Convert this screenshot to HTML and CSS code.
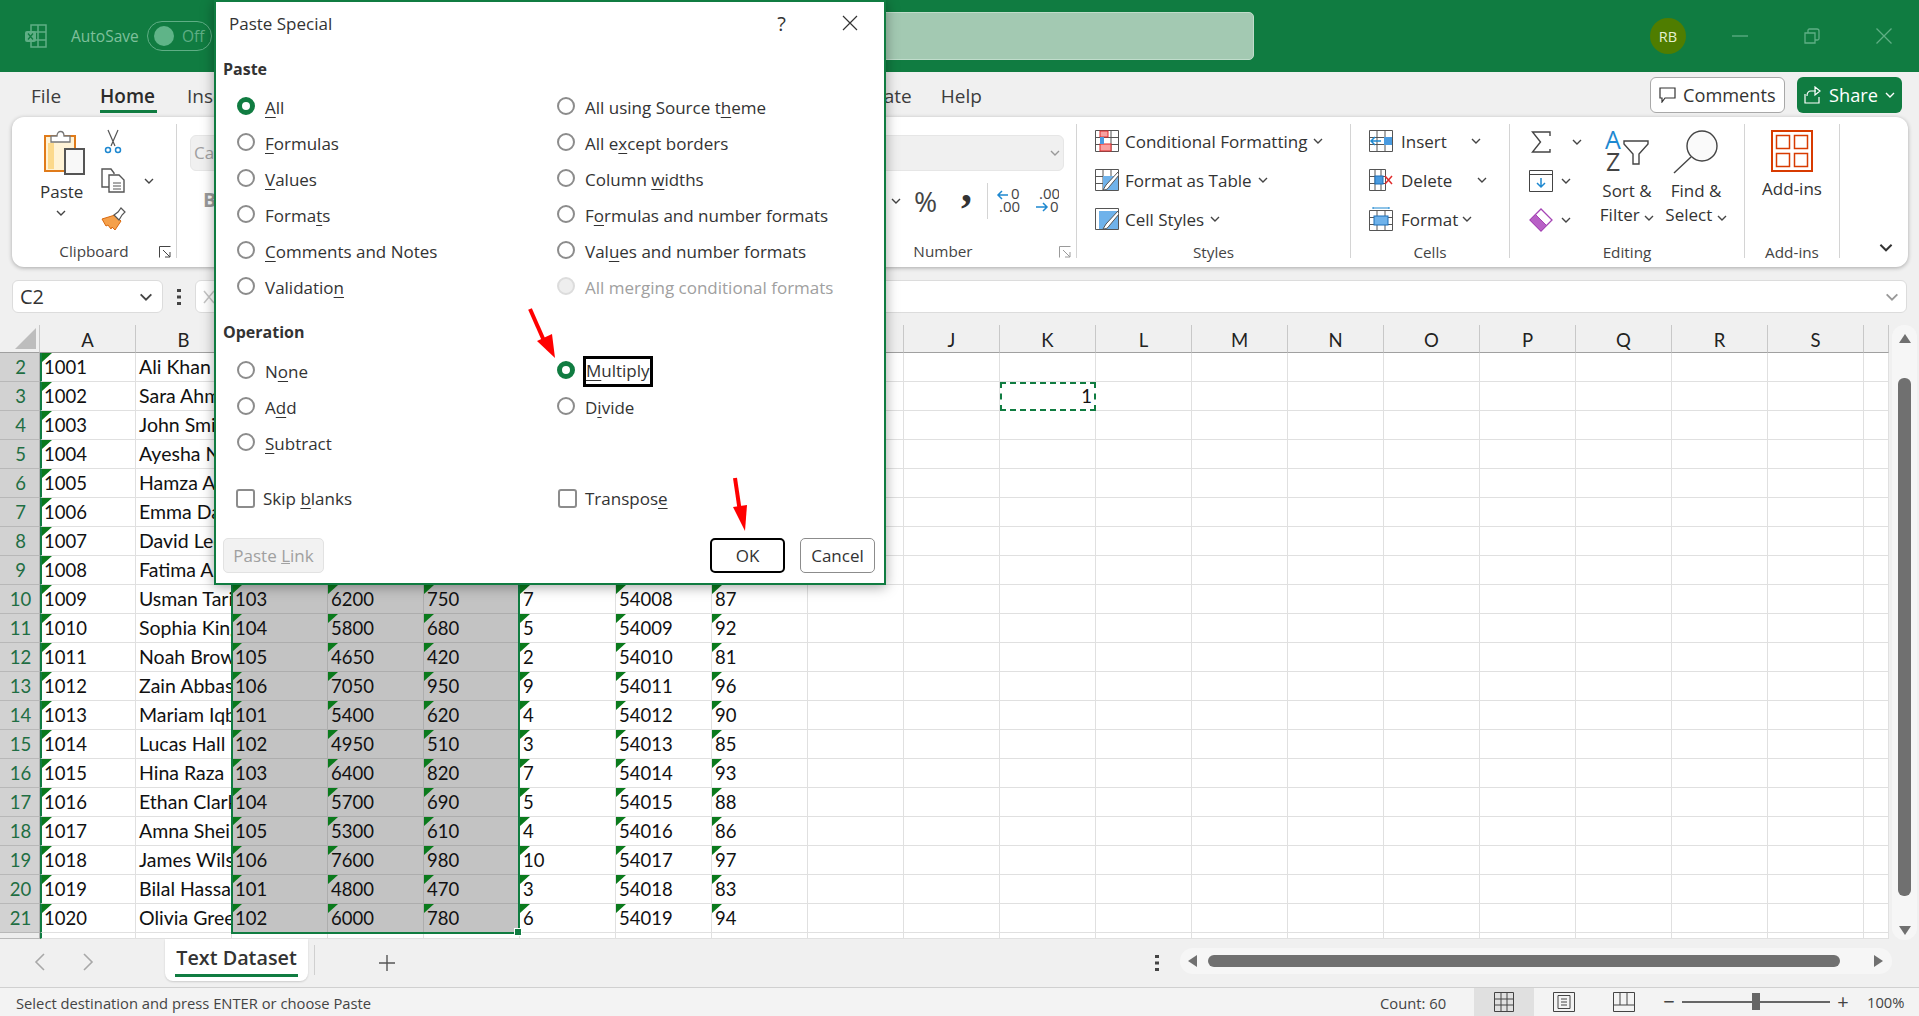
FILE: index.html
```html
<!DOCTYPE html>
<html lang="en">
<head>
    <meta charset="UTF-8">
    <title>Paste Special - Excel</title>
    <link rel="stylesheet" href="styles.css">
</head>
<body>
    <svg class="sprite" width="0" height="0">
        <symbol id="chev" viewBox="0 0 10 6"><path d="M1 1l4 4 4-4" fill="none" stroke="currentColor" stroke-width="1.4"/></symbol>
        <symbol id="launcher" viewBox="0 0 12 12"><path d="M.5 11.5V.5h11M4 4l7 7M11 6v5H6" fill="none" stroke="currentColor"/></symbol>
    </svg>

    <div class="app">
        <!-- Title bar -->
        <div class="titlebar">
            <svg class="logo" width="24" height="24" viewBox="0 0 24 24">
                <path d="M7 1h15v22H7zM7 8h15M7 16h15M14 1v22" fill="none" stroke="#5fae85" stroke-width="1.5"/>
                <rect x="1" y="7" width="11" height="11" rx="2" fill="#5fae85"/>
                <path d="M4 9.5l5 6M9 9.5l-5 6" stroke="#107c41" stroke-width="1.3"/>
            </svg>
            <span class="autosave">AutoSave</span>
            <span class="toggle"><span class="toggle-knob"></span>Off</span>
            <div class="search"></div>
            <span class="avatar">RB</span>
            <svg class="win-btn" width="16" height="16" viewBox="0 0 16 16"><path d="M0 8h16" stroke="#5fae85" stroke-width="1.3"/></svg>
            <svg class="win-btn" width="16" height="16" viewBox="0 0 16 16"><path d="M1 5h10v10H1zM4 5V2.500C4 1.500 4.500 1 5.500 1H13c1 0 2 1 2 2v7.500c0 1-.5 1.500-1.500 1.500H11" fill="none" stroke="#5fae85" stroke-width="1.3"/></svg>
            <svg class="win-btn" width="16" height="16" viewBox="0 0 16 16"><path d="M.5.500l15 15M15.500.500l-15 15" stroke="#5fae85" stroke-width="1.3"/></svg>
        </div>

        <!-- Menu tabs -->
        <div class="menubar">
            <a class="menu-item file">File</a>
            <a class="menu-item active">Home</a>
            <a class="menu-item">Insert</a>
            <a class="menu-item tail">Automate</a>
            <a class="menu-item">Help</a>
            <button class="comments-btn">
                <svg width="17" height="16" viewBox="0 0 17 16"><path d="M1 1h15v10H6l-3 4v-4H1z" fill="none" stroke="#333" stroke-width="1.2"/></svg>
                Comments
            </button>
            <button class="share-btn">
                <svg width="18" height="18" viewBox="0 0 18 18"><path d="M12 5H7C4 5 3 7 3 10M11 1l5 4-5 4zM1 8v9h14v-6" fill="none" stroke="#fff" stroke-width="1.200"/></svg>
                Share
                <svg class="chev"><use href="#chev"/></svg>
            </button>
        </div>

        <!-- Ribbon -->
        <div class="ribbon">
            <div class="group clipboard">
                <div class="group-body clip-body">
                    <div class="paste-col">
                        <svg width="42" height="46" viewBox="0 0 42 46">
                            <rect x="1" y="6" width="30" height="35" fill="#fff3d6" stroke="#e07b1a" stroke-width="2"/>
                            <rect x="4" y="13" width="6" height="26" fill="#fcd98b"/>
                            <path d="M7 12V6h6c0-6 7-6 7 0h6v6z" fill="#fff" stroke="#777" stroke-width="1.300"/>
                            <rect x="21" y="19" width="19" height="25" fill="#f8f8f8" stroke="#555" stroke-width="2"/>
                        </svg>
                        <span>Paste</span>
                        <svg class="chev"><use href="#chev"/></svg>
                    </div>
                    <div class="clip-tools">
                        <svg width="18" height="25" viewBox="0 0 18 25">
                            <path d="M4 1l7 16M14 1L7 17" stroke="#555" stroke-width="1.200" fill="none"/>
                            <circle cx="4" cy="21" r="2.500" fill="#fff" stroke="#1e88d0" stroke-width="1.500"/>
                            <circle cx="14" cy="21" r="2.500" fill="#fff" stroke="#1e88d0" stroke-width="1.500"/>
                        </svg>
                        <span class="tool-row">
                            <svg width="25" height="25" viewBox="0 0 25 25">
                                <path d="M8 19H1V1h9l3 4v1" fill="#fff" stroke="#555" stroke-width="1.400"/>
                                <path d="M8 7h10l5 5v12H8z" fill="#fff" stroke="#555" stroke-width="1.400"/>
                                <path d="M12 15h8M12 18h8M12 21h8" stroke="#555"/>
                            </svg>
                            <svg class="chev"><use href="#chev"/></svg>
                        </span>
                        <svg width="25" height="24" viewBox="0 0 25 24">
                            <path d="M1 12l13-4 6 6-6 9-3-3-1 2-3-4-2 1z" fill="#f5a04a" stroke="#d9690f"/>
                            <path d="M13 8l4-3 3-4 4 4-3 3-3 5z" fill="#fff" stroke="#555" stroke-width="1.200"/>
                        </svg>
                    </div>
                </div>
                <div class="group-label">Clipboard</div>
                <svg class="launcher"><use href="#launcher"/></svg>
            </div>

            <!-- Font and Alignment groups lie behind the dialog -->
            <div class="group font-group">
                <div class="group-body combo-body">
                    <div class="combo">Ca</div>
                    <div class="font-b">B</div>
                </div>
            </div>

            <div class="group align-group"></div>

            <div class="group number-group">
                <div class="group-body number-body">
                    <div class="combo number-combo"><svg class="chev"><use href="#chev"/></svg></div>
                    <div class="number-tools">
                        <svg class="chev"><use href="#chev"/></svg>
                        <span class="percent">%</span>
                        <span class="comma">,</span>
                        <span class="num-sep"></span>
                        <svg width="24" height="26" viewBox="0 0 24 26">
                            <path d="M12 7H2M6 3L2 7l4 4" fill="none" stroke="#1e88d0" stroke-width="1.500"/>
                            <text x="15" y="11" class="dec-text">0</text>
                            <text x="3" y="24" class="dec-text">.00</text>
                        </svg>
                        <svg width="24" height="26" viewBox="0 0 24 26">
                            <text x="4" y="11" class="dec-text">.00</text>
                            <path d="M1 19h11M8 15l4 4-4 4" fill="none" stroke="#1e88d0" stroke-width="1.500"/>
                            <text x="15" y="24" class="dec-text">0</text>
                        </svg>
                    </div>
                </div>
                <div class="group-label">Number</div>
                <svg class="launcher faded"><use href="#launcher"/></svg>
            </div>

            <div class="group styles-group">
                <div class="group-body stack">
                    <div class="stack-row">
                        <svg width="24" height="22" viewBox="0 0 24 22">
                            <path d="M.5.500h23v21H.5zM8 .500v21M16 .500v21M.5 7.500h23M.5 14.500h23" fill="#fff" stroke="#555"/>
                            <rect x="5" y="1" width="8" height="6" fill="#f7a1a1" stroke="#e02b2b"/>
                            <rect x="5" y="14" width="11" height="7" fill="#f7a1a1" stroke="#e02b2b"/>
                            <rect x="5" y="7" width="4" height="7" fill="#4a9be0"/>
                        </svg>
                        Conditional Formatting
                        <svg class="chev"><use href="#chev"/></svg>
                    </div>
                    <div class="stack-row">
                        <svg width="24" height="22" viewBox="0 0 24 22">
                            <path d="M.5.500h23v21H.5zM8 .500v21M16 .500v21M.5 7.500h23M.5 14.500h23" fill="#fff" stroke="#555"/>
                            <path d="M8 7h15v14H8z" fill="#6fb2ea"/>
                            <path d="M23 3L11 16l-3 5c3 0 5-1 6-3L24 6z" fill="#fff" stroke="#555"/>
                        </svg>
                        Format as Table
                        <svg class="chev"><use href="#chev"/></svg>
                    </div>
                    <div class="stack-row">
                        <svg width="24" height="22" viewBox="0 0 24 22">
                            <path d="M.5.500h23v21H.5z" fill="#fff" stroke="#555"/>
                            <path d="M4 3h19v18H4z" fill="#6fb2ea"/>
                            <path d="M23 3L11 16l-3 5c3 0 5-1 6-3L24 6z" fill="#fff" stroke="#555"/>
                        </svg>
                        Cell Styles
                        <svg class="chev"><use href="#chev"/></svg>
                    </div>
                </div>
                <div class="group-label low">Styles</div>
            </div>

            <div class="group cells-group">
                <div class="group-body stack">
                    <div class="stack-row">
                        <svg width="24" height="22" viewBox="0 0 24 22">
                            <path d="M.5.500h23v21H.5zM8 .500v21M16 .500v21M.5 7.500h23M.5 14.500h23" fill="#fff" stroke="#555"/>
                            <rect x="15" y="7" width="8" height="8" fill="#4a9be0"/>
                            <path d="M12 11H2M6 7l-4 4 4 4" fill="none" stroke="#1e88d0" stroke-width="1.500"/>
                        </svg>
                        <span class="w-insert">Insert</span>
                        <svg class="chev"><use href="#chev"/></svg>
                    </div>
                    <div class="stack-row">
                        <svg width="24" height="22" viewBox="0 0 24 22">
                            <path d="M.5.500h16v21H.5zM6 .500v21M12 .500v21M.5 7.500h16M.5 14.500h16" fill="#fff" stroke="#555"/>
                            <rect x="6" y="7" width="8" height="8" fill="#4a9be0" stroke="#1c6fb8"/>
                            <path d="M16 7l7 8M23 7l-7 8" stroke="#e02b2b" stroke-width="1.500"/>
                        </svg>
                        <span class="w-delete">Delete</span>
                        <svg class="chev"><use href="#chev"/></svg>
                    </div>
                    <div class="stack-row">
                        <svg width="24" height="24" viewBox="0 0 24 24">
                            <path d="M.5 3.500h23v20H.5zM8 3.500v20M16 3.500v20M.5 10.500h23M.5 17.500h23" fill="#fff" stroke="#555"/>
                            <rect x="5" y="9" width="14" height="9" fill="#6fb2ea" stroke="#1c6fb8"/>
                            <path d="M4 1h16M4 0v2M20 0v2" stroke="#1e88d0"/>
                        </svg>
                        <span class="w-format">Format</span>
                        <svg class="chev"><use href="#chev"/></svg>
                    </div>
                </div>
                <div class="group-label low">Cells</div>
            </div>

            <div class="group editing-group">
                <div class="group-body editing-body">
                    <div class="edit-tools">
                        <div class="edit-row">
                            <svg width="24" height="22" viewBox="0 0 24 22"><path d="M21 5V1H3.500l8 10-8 10H21v-3" fill="none" stroke="#444" stroke-width="1.400"/></svg>
                            <svg class="chev far"><use href="#chev"/></svg>
                        </div>
                        <div class="edit-row">
                            <svg width="24" height="22" viewBox="0 0 24 22">
                                <path d="M.5.500h23v21H.5zM.5 4.500h23" fill="#fff" stroke="#444"/>
                                <path d="M12 8v9M8 13l4 4 4-4" fill="none" stroke="#1e88d0" stroke-width="1.500"/>
                            </svg>
                            <svg class="chev"><use href="#chev"/></svg>
                        </div>
                        <div class="edit-row">
                            <svg width="24" height="24" viewBox="0 0 24 24">
                                <path d="M1 12L12 1l11 11-11 11z" fill="#fff" stroke="#a545b5" stroke-width="1.300"/>
                                <path d="M1 12l5.500-5.500 11 11L12 23z" fill="#b860c6" stroke="#a545b5"/>
                            </svg>
                            <svg class="chev"><use href="#chev"/></svg>
                        </div>
                    </div>
                    <div class="big-btn sort-btn">
                        <svg width="44" height="44" viewBox="0 0 44 44">
                            <text x="0" y="19" class="az-a">A</text>
                            <text x="1" y="41" class="az-z">Z</text>
                            <path d="M19 11h24v3L34 24v10h-6V24L19 14z" fill="#fff" stroke="#444" stroke-width="1.400"/>
                        </svg>
                        <span>Sort &amp;</span>
                        <span>Filter <svg class="chev"><use href="#chev"/></svg></span>
                    </div>
                    <div class="big-btn find-btn">
                        <svg width="46" height="44" viewBox="0 0 46 44">
                            <circle cx="29" cy="16" r="15" fill="#fafafa" stroke="#444" stroke-width="1.400"/>
                            <path d="M18 27L1 43" stroke="#444" stroke-width="1.400"/>
                        </svg>
                        <span>Find &amp;</span>
                        <span>Select <svg class="chev"><use href="#chev"/></svg></span>
                    </div>
                </div>
                <div class="group-label low">Editing</div>
            </div>

            <div class="group addins-group">
                <div class="group-body">
                    <div class="big-btn">
                        <svg width="42" height="42" viewBox="0 0 42 42">
                            <path d="M1 1h40v40H1z" fill="#fff" stroke="#d83b01" stroke-width="2"/>
                            <path d="M5.500 5.500h13v13h-13zM23.500 5.500h13v13h-13zM5.500 23.500h13v13h-13zM23.500 23.500h13v13h-13z" fill="#fff" stroke="#d83b01" stroke-width="1.500"/>
                        </svg>
                        <span>Add-ins</span>
                    </div>
                </div>
                <div class="group-label low">Add-ins</div>
            </div>

            <svg class="collapse"><use href="#chev"/></svg>
        </div>

        <!-- Formula bar -->
        <div class="formulabar">
            <div class="namebox">C2 <svg class="chev"><use href="#chev"/></svg></div>
            <svg class="kebab" width="4" height="16" viewBox="0 0 4 16"><path d="M0 0h4v3H0zM0 6.500h4v3H0zM0 13h4v3H0z" fill="#444"/></svg>
            <div class="formula-input">
                <svg class="cancel-x" width="12" height="14" viewBox="0 0 12 14"><path d="M1 1l10 12M11 1L1 13" stroke="#c4c4c4" stroke-width="1.500"/></svg>
                <svg class="chev"><use href="#chev"/></svg>
            </div>
        </div>

        <!-- Sheet -->
        <div class="sheet-area">
            <div class="grid" id="grid">
                <div class="selection"></div>
            </div>
            <div class="vscroll">
                <span class="arrow-up"></span>
                <span class="vthumb"></span>
                <span class="arrow-down"></span>
            </div>
        </div>

        <!-- Sheet tabs -->
        <div class="sheetbar">
            <svg class="sheet-nav" width="12" height="18" viewBox="0 0 12 18"><path d="M10 1L2 9l8 8" fill="none" stroke="#a8a8a8" stroke-width="1.600"/></svg>
            <svg class="sheet-nav" width="12" height="18" viewBox="0 0 12 18"><path d="M2 1l8 8-8 8" fill="none" stroke="#a8a8a8" stroke-width="1.600"/></svg>
            <div class="sheet-tab"><span>Text Dataset</span></div>
            <span class="sheet-sep"></span>
            <svg class="sheet-add" width="18" height="18" viewBox="0 0 18 18"><path d="M9 1v16M1 9h16" stroke="#555" stroke-width="1.400"/></svg>
            <svg class="kebab sheet-kebab" width="4" height="16" viewBox="0 0 4 16"><path d="M0 0h4v3H0zM0 6.500h4v3H0zM0 13h4v3H0z" fill="#444"/></svg>
            <div class="hscroll">
                <span class="arrow-left"></span>
                <span class="hthumb"></span>
                <span class="arrow-right"></span>
            </div>
        </div>

        <!-- Status bar -->
        <div class="statusbar">
            <span class="status-msg">Select destination and press ENTER or choose Paste</span>
            <span class="status-count">Count: 60</span>
            <div class="view-btn on">
                <svg width="20" height="20" viewBox="0 0 20 20"><path d="M.5.500h19v19H.5zM7 .500v19M13 .500v19M.5 7h19M.5 13h19" fill="none" stroke="#444"/></svg>
            </div>
            <div class="view-btn">
                <svg width="22" height="20" viewBox="0 0 22 20"><path d="M.5.500h21v19H.5z" fill="none" stroke="#444"/><path d="M5 3.500h12v13H5zM8 7h6M8 10h6M8 13h6" fill="none" stroke="#444"/></svg>
            </div>
            <div class="view-btn">
                <svg width="22" height="20" viewBox="0 0 22 20"><path d="M.5.500h21v19H.5zM.5 13h21M7 .500V13M14 .500V13" fill="none" stroke="#444"/></svg>
            </div>
            <div class="zoom-ctl">
                <span class="zoom-sign">&minus;</span>
                <span class="zoom-track"><span class="zoom-thumb"></span></span>
                <span class="zoom-sign">+</span>
                <span class="zoom-val">100%</span>
            </div>
        </div>
    </div>

    <!-- Paste Special dialog -->
    <div class="dialog">
        <div class="dlg-title">
            <span>Paste Special</span>
            <span class="dlg-help">?</span>
            <svg width="16" height="16" viewBox="0 0 16 16"><path d="M1 1l14 14M15 1L1 15" stroke="#333" stroke-width="1.200"/></svg>
        </div>
        <div class="dlg-heading">Paste</div>
        <div class="opt-grid">
            <label class="opt"><span class="radio on"></span><span><u>A</u>ll</span></label>
            <label class="opt"><span class="radio"></span><span>All using Source t<u>h</u>eme</span></label>
            <label class="opt"><span class="radio"></span><span><u>F</u>ormulas</span></label>
            <label class="opt"><span class="radio"></span><span>All e<u>x</u>cept borders</span></label>
            <label class="opt"><span class="radio"></span><span><u>V</u>alues</span></label>
            <label class="opt"><span class="radio"></span><span>Column <u>w</u>idths</span></label>
            <label class="opt"><span class="radio"></span><span>Forma<u>t</u>s</span></label>
            <label class="opt"><span class="radio"></span><span>F<u>o</u>rmulas and number formats</span></label>
            <label class="opt"><span class="radio"></span><span><u>C</u>omments and Notes</span></label>
            <label class="opt"><span class="radio"></span><span>Val<u>u</u>es and number formats</span></label>
            <label class="opt"><span class="radio"></span><span>Validatio<u>n</u></span></label>
            <label class="opt disabled"><span class="radio"></span><span>All merging conditional formats</span></label>
        </div>
        <div class="dlg-heading second">Operation</div>
        <div class="opt-grid">
            <label class="opt"><span class="radio"></span><span>N<u>o</u>ne</span></label>
            <label class="opt"><span class="radio on"></span><span class="focus"><u>M</u>ultiply</span></label>
            <label class="opt"><span class="radio"></span><span>A<u>d</u>d</span></label>
            <label class="opt"><span class="radio"></span><span>D<u>i</u>vide</span></label>
            <label class="opt"><span class="radio"></span><span><u>S</u>ubtract</span></label>
        </div>
        <div class="opt-grid checks">
            <label class="opt"><span class="check left"></span><span>Skip <u>b</u>lanks</span></label>
            <label class="opt"><span class="check"></span><span>Transpos<u>e</u></span></label>
        </div>
        <div class="dlg-buttons">
            <button class="dlg-btn link" disabled>Paste <u>L</u>ink</button>
            <button class="dlg-btn ok">OK</button>
            <button class="dlg-btn">Cancel</button>
        </div>
    </div>

    <!-- Red callout arrows on top of the dialog -->
    <svg class="arrows" width="1919" height="1016" viewBox="0 0 1919 1016">
        <path d="M530 309l15 34" stroke="#ff0000" stroke-width="4" fill="none"/>
        <path d="M537 341l15-7 3 24z" fill="#ff0000"/>
        <path d="M735 478l5 34" stroke="#ff0000" stroke-width="4" fill="none"/>
        <path d="M733 507l14-2-2 26z" fill="#ff0000"/>
    </svg>

    <script src="script.js"></script>
</body>
</html>
```

FILE: styles.css
```css
/* General Reset */
* {
    box-sizing: border-box;
    margin: 0;
    padding: 0;
}

body {
    width: 1919px;
    height: 1016px;
    overflow: hidden;
    position: relative;
    background: #f0f0f0;
    font-family: "Open Sans", "Noto Sans", sans-serif;
    font-size: 16px;
    color: #333;
}

.sprite {
    position: absolute;
}

.chev {
    width: 10px;
    height: 6px;
    color: #444;
    flex: none;
}

.app {
    display: flex;
    flex-direction: column;
    height: 1016px;
}

/* Title bar */
.titlebar {
    height: 72px;
    background: #107c41;
    display: flex;
    align-items: center;
    padding-left: 24px;
    flex: none;
}

.autosave {
    margin-left: 23px;
    color: #7fc09c;
    font-size: 15.5px;
    width: 76px;
}

.toggle {
    width: 65px;
    height: 30px;
    border: 1px solid #5fae85;
    border-radius: 15px;
    display: flex;
    align-items: center;
    gap: 8px;
    padding-left: 6px;
    color: #5fae85;
    font-size: 15.500px;
}

.toggle-knob {
    width: 20px;
    height: 20px;
    border-radius: 50%;
    background: #5fb488;
}

.search {
    margin-left: auto;
    width: 500px;
    height: 48px;
    background: #a3c9b2;
    border: 1px solid #c0dccb;
    border-radius: 5px;
}

.avatar {
    width: 36px;
    height: 36px;
    border-radius: 50%;
    background: #4f7d00;
    color: #e6f0d0;
    font-size: 14.500px;
    display: flex;
    align-items: center;
    justify-content: center;
    margin-left: 396px;
    margin-right: 46px;
}

.win-btn {
    margin-right: 56px;
}

.win-btn:last-child {
    margin-right: 27px;
}

/* Menu tabs */
.menubar {
    height: 45px;
    display: flex;
    align-items: center;
    padding-left: 31px;
    font-size: 19px;
    flex: none;
}

.menu-item {
    margin-right: 32px;
    line-height: 34px;
    position: relative;
    color: #3c3c3c;
    margin-top: 2px;
}

.menu-item.file {
    margin-right: 39px;
}

.menu-item.active {
    font-weight: 600;
    color: #2b2b2b;
}

.menu-item.active::after {
    content: "";
    position: absolute;
    left: 0;
    right: -2px;
    bottom: 0;
    height: 3px;
    background: #107c41;
}

.menu-item.tail {
    margin-left: 554px;
    margin-right: 29px;
}

.comments-btn,
.share-btn {
    height: 36px;
    border-radius: 6px;
    font-family: inherit;
    font-size: 18.200px;
    display: flex;
    align-items: center;
}

.comments-btn {
    margin-left: auto;
    width: 135px;
    background: #fff;
    border: 1px solid #a8a8a8;
    color: #333;
    gap: 7px;
    padding-left: 8px;
}

.share-btn {
    width: 105px;
    margin-left: 12px;
    margin-right: 17px;
    background: #107c41;
    border: none;
    color: #fff;
    gap: 7px;
    padding-left: 7px;
}

.share-btn .chev {
    color: #fff;
}

/* Ribbon */
.ribbon {
    height: 150px;
    margin: 0 11px 0 12px;
    background: #fff;
    border-radius: 12px;
    box-shadow: 0 1px 4px rgba(0, 0, 0, 0.3);
    display: flex;
    padding: 7px 0 9px;
    position: relative;
    flex: none;
    font-size: 17px;
}

.group {
    position: relative;
    display: flex;
    flex-direction: column;
    border-right: 1px solid #d4d4d4;
    height: 134px;
    flex: none;
}

.group-body {
    flex: 1;
    min-height: 0;
}

.group-label {
    text-align: center;
    font-size: 15.300px;
    line-height: 14px;
    height: 14px;
    color: #444;
    white-space: nowrap;
}

.group-label.low {
    line-height: 16px;
}

.launcher {
    position: absolute;
    right: 5px;
    bottom: 0;
    width: 12px;
    height: 12px;
    color: #444;
}

.launcher.faded {
    color: #9a9a9a;
}

.clipboard {
    width: 165px;
}

.clip-body {
    display: flex;
}

.paste-col {
    width: 98px;
    padding: 6px 0 0 32px;
    display: flex;
    flex-direction: column;
    align-items: flex-start;
}

.paste-col span {
    margin: 5px 0 0 -4px;
    line-height: 22px;
    white-space: nowrap;
}

.paste-col .chev {
    margin: 7px 0 0 12px;
}

.clip-tools {
    padding-top: 5px;
    display: flex;
    flex-direction: column;
    gap: 14px;
    align-items: flex-start;
    margin-left: -9px;
}

.clip-tools > svg:first-child {
    margin-left: 3px;
}

.tool-row {
    display: flex;
    align-items: center;
    gap: 18px;
}

.font-group {
    width: 352px;
}

.combo-body {
    padding: 11px 0 0 13px;
}

.combo {
    height: 36px;
    background: #f0f0f0;
    border: 1px solid #e6e6e6;
    border-radius: 6px;
    color: #a0a0a0;
    line-height: 34px;
    padding-left: 3px;
}

.font-b {
    font-weight: 700;
    color: #9a9a9a;
    font-size: 20px;
    margin: 15px 0 0 13px;
}

.align-group {
    width: 340px;
}

.number-group {
    width: 208px;
}

.number-body {
    padding: 11px 12px 0 0;
}

.number-combo {
    display: flex;
    align-items: center;
    justify-content: flex-end;
    padding-right: 3px;
}

.number-combo .chev {
    color: #999;
}

.number-tools {
    margin-top: 12px;
    height: 36px;
    display: flex;
    align-items: center;
    padding-left: 22px;
}

.percent {
    font-size: 28px;
    color: #444;
    margin-left: 13px;
    width: 47px;
    line-height: 36px;
}

.comma {
    font-family: "Liberation Serif", serif;
    font-weight: 700;
    font-size: 44px;
    line-height: 20px;
    color: #333;
    width: 26px;
    margin-top: -26px;
}

.num-sep {
    width: 1px;
    height: 36px;
    background: #d4d4d4;
    margin-right: 8px;
}

.number-tools svg + svg {
    margin-left: 15px;
}

.dec-text {
    font-size: 15px;
    fill: #444;
}

.number-group .group-label {
    width: 148px;
}

/* Styles and Cells stacks */
.stack {
    padding: 0 0 0 18px;
    display: flex;
    flex-direction: column;
}

.stack-row {
    height: 39px;
    line-height: 39px;
    display: flex;
    align-items: center;
    gap: 6px;
    white-space: nowrap;
    margin-top: -2px;
    padding-bottom: 1px;
}

.stack-row + .stack-row {
    margin-top: 0;
}

.styles-group {
    width: 274px;
}

.cells-group {
    width: 159px;
}

.cells-group .stack-row {
    gap: 8px;
}

.w-insert {
    width: 62px;
}

.w-delete {
    width: 68px;
}

.w-format {
    width: 53px;
}

.editing-group {
    width: 235px;
}

.editing-body {
    display: flex;
}

.edit-tools {
    width: 88px;
    margin-top: -2px;
    padding-left: 19px;
    display: flex;
    flex-direction: column;
}

.edit-row {
    height: 39px;
    display: flex;
    align-items: center;
    gap: 8px;
    flex: none;
}

.chev.far {
    margin-left: 11px;
}

.big-btn {
    display: flex;
    flex-direction: column;
    align-items: center;
    padding-top: 6px;
    line-height: 24px;
    white-space: nowrap;
}

.big-btn > svg {
    margin-bottom: 5px;
}

.sort-btn {
    width: 58px;
    margin-right: 9px;
}

.find-btn {
    width: 62px;
}

.az-a {
    font-size: 25px;
    fill: #1e88d0;
}

.az-z {
    font-size: 25px;
    fill: #444;
}

.addins-group {
    width: 95px;
}

.collapse {
    position: absolute;
    right: 15px;
    bottom: 15px;
    width: 14px;
    height: 9px;
    color: #333;
}

/* Formula bar */
.formulabar {
    margin: 13px 12px 12px;
    height: 33px;
    display: flex;
    align-items: center;
    flex: none;
}

.namebox {
    width: 151px;
    height: 33px;
    background: #fff;
    border: 1px solid #dcdcdc;
    border-radius: 6px;
    display: flex;
    align-items: center;
    justify-content: space-between;
    padding: 0 9px 0 7px;
    font-size: 20px;
}

.namebox .chev,
.formula-input .chev {
    width: 14px;
    height: 8px;
}

.kebab {
    margin-left: 14px;
    flex: none;
}

.formula-input {
    margin-left: 14px;
    flex: 1;
    height: 33px;
    background: #fff;
    border: 1px solid #dcdcdc;
    border-radius: 6px;
    display: flex;
    align-items: center;
    justify-content: space-between;
    padding: 0 7px;
}

.formula-input .chev {
    color: #999;
}

/* Sheet grid */
.sheet-area {
    height: 614px;
    display: flex;
    flex: none;
}

.grid {
    width: 1889px;
    display: grid;
    grid-template-columns: 40px repeat(19, 96px) 25px;
    grid-template-rows: 28px repeat(20, 29px) 6px;
    background: #fff;
    font-family: Lato, "Liberation Sans", sans-serif;
    font-size: 18.500px;
    color: #111;
    position: relative;
    border-bottom: 1px solid #d8d8d8;
}

.cell {
    border-right: 1px solid #e0e0e0;
    border-bottom: 1px solid #e0e0e0;
    padding-left: 3px;
    line-height: 28px;
    white-space: nowrap;
    overflow: hidden;
    position: relative;
}

.cell.name {
    font-size: 19.500px;
}

.cell.head {
    background: #f0f0f0;
    border-right-color: #c8c8c8;
    border-bottom: 1px solid #a0a0a0;
    padding-left: 0;
    text-align: center;
    line-height: 30px;
    color: #222;
}

.cell.corner {
    padding: 0;
}

.cell.corner::after {
    content: "";
    position: absolute;
    right: 3px;
    bottom: 3px;
    width: 21px;
    height: 21px;
    background: #bdbdbd;
    clip-path: polygon(100% 0, 100% 100%, 0 100%);
}

.cell.rowhead {
    background: #d2d2d2;
    border-right: 1px solid #b0b0b0;
    border-bottom: 1px solid #b8b8b8;
    color: #1f6e43;
    padding: 0 0 0 2px;
    text-align: center;
}

.cell.rowhead.plain {
    background: #ededed;
}

.cell.sel {
    background: #c3c3c3;
    border-color: #adadad;
}

.cell.col-a {
    border-left: 2px solid #107c41;
    padding-left: 2px;
}

/* number stored as text marker */
.cell.flag::before {
    content: "";
    position: absolute;
    left: 0;
    top: 0;
    width: 10px;
    height: 9px;
    background: #0a7a1c;
    clip-path: polygon(0 0, 100% 0, 0 100%);
}

.cell.copied {
    text-align: right;
    padding-right: 2px;
    overflow: visible;
    border: 2px dashed #107c41;
    line-height: 25px;
}

/* sits over the cells, so it must stay out of the grid's auto placement */
.selection {
    position: absolute;
    grid-column: 4 / 7;
    grid-row: 2 / 22;
    top: -1px;
    left: -1px;
    right: 0;
    bottom: -1px;
    border: 2px solid #107c41;
    pointer-events: none;
    z-index: 2;
}

.selection::after {
    content: "";
    position: absolute;
    right: -4px;
    bottom: -4px;
    width: 6px;
    height: 6px;
    background: #107c41;
    border: 1px solid #fff;
}

/* Vertical scroll */
.vscroll {
    width: 25px;
    margin-left: 3px;
    height: 615px;
    background: #f6f6f6;
    border-radius: 12px;
    display: flex;
    flex-direction: column;
    align-items: center;
    position: relative;
}

.arrow-up {
    margin-top: 9px;
    width: 0;
    height: 0;
    border: 6.500px solid transparent;
    border-top: 0;
    border-bottom: 9px solid #707070;
}

.vthumb {
    margin-top: 35px;
    width: 13px;
    height: 518px;
    background: #707070;
    border-radius: 6px;
}

.arrow-down {
    margin-top: 30px;
    width: 0;
    height: 0;
    border: 6.500px solid transparent;
    border-bottom: 0;
    border-top: 9px solid #707070;
}

/* Sheet tabs */
.sheetbar {
    height: 48px;
    display: flex;
    align-items: center;
    padding-left: 34px;
    flex: none;
    position: relative;
}

.sheet-nav {
    margin-right: 36px;
    margin-top: -2px;
}

.sheet-tab {
    margin-left: 35px;
    align-self: flex-start;
    height: 42px;
    width: 143px;
    background: #fff;
    border-radius: 0 0 8px 8px;
    padding: 0 12px;
    box-shadow: 0 1px 2px rgba(0, 0, 0, 0.15);
    text-align: center;
}

.sheet-tab span {
    display: block;
    font-size: 19.800px;
    font-weight: 600;
    line-height: 32px;
    padding-top: 3px;
    border-bottom: 3px solid #107c41;
    white-space: nowrap;
    color: #333;
    margin: 0 -2px;
}

.sheet-sep {
    width: 1px;
    height: 30px;
    background: #d0d0d0;
    margin-left: 6px;
    margin-top: -6px;
}

.sheet-add {
    margin-left: 63px;
}

.sheet-kebab {
    margin-left: auto;
}

.hscroll {
    width: 712px;
    height: 26px;
    margin-left: 21px;
    margin-right: 27px;
    background: #f6f6f6;
    border-radius: 13px;
    display: flex;
    align-items: center;
    padding-left: 8px;
    margin-top: -4px;
}

.arrow-left {
    width: 0;
    height: 0;
    border: 6.500px solid transparent;
    border-left: 0;
    border-right: 9px solid #707070;
}

.hthumb {
    margin-left: 11px;
    width: 632px;
    height: 12px;
    background: #707070;
    border-radius: 6px;
}

.arrow-right {
    margin-left: 34px;
    width: 0;
    height: 0;
    border: 6.500px solid transparent;
    border-right: 0;
    border-left: 9px solid #707070;
}

/* Status bar */
.statusbar {
    height: 29px;
    background: #f3f3f3;
    border-top: 1px solid #d0d0d0;
    display: flex;
    align-items: center;
    padding-left: 16px;
    font-size: 14.750px;
    flex: none;
    color: #444;
}

.status-msg {
    width: 1364px;
    white-space: nowrap;
    padding-top: 2px;
}

.status-count {
    width: 94px;
    padding-top: 2px;
}

.view-btn {
    width: 60px;
    height: 28px;
    display: flex;
    align-items: center;
    justify-content: center;
}

.view-btn.on {
    background: #e0e0e0;
}

.zoom-ctl {
    margin-left: 8px;
    display: flex;
    align-items: center;
}

.zoom-sign {
    width: 14px;
    font-size: 20px;
    line-height: 20px;
    text-align: center;
}

.zoom-track {
    margin: 0 6px;
    width: 148px;
    height: 2px;
    background: #666;
    position: relative;
}

.zoom-thumb {
    position: absolute;
    left: 70px;
    top: -8px;
    width: 8px;
    height: 17px;
    background: #666;
}

.zoom-val {
    margin-left: 17px;
}

/* Paste Special dialog */
.dialog {
    position: absolute;
    left: 214px;
    top: 0;
    width: 672px;
    height: 585px;
    background: #fff;
    border: 2px solid #107c41;
    box-shadow: 0 2px 12px rgba(0, 0, 0, 0.35);
    padding: 0 9px 0 7px;
    font-size: 17px;
    color: #333;
    z-index: 5;
}

.dlg-title {
    height: 42px;
    margin-bottom: 4px;
    display: flex;
    align-items: center;
    padding-left: 6px;
}

.dlg-title span:first-child {
    flex: 1;
}

.dlg-help {
    font-size: 20px;
    margin-right: 56px;
}

.dlg-title svg {
    margin-right: 17px;
}

.dlg-heading {
    height: 41px;
    line-height: 42px;
    font-weight: 700;
    font-size: 16px;
}

.dlg-heading.second {
    height: 48px;
    padding-top: 6px;
}

.opt-grid {
    display: grid;
    grid-template-columns: 320px 1fr;
    padding-left: 14px;
}

.opt {
    height: 36px;
    display: flex;
    align-items: center;
    gap: 10px;
    white-space: nowrap;
}

.opt u {
    text-underline-offset: 3px;
}

.radio {
    width: 18px;
    height: 18px;
    border: 2px solid #8c8c8c;
    border-radius: 50%;
    flex: none;
    margin-top: -2px;
}

.radio.on {
    border: 5px solid #107c41;
}

.opt.disabled {
    color: #a0a0a0;
}

.opt.disabled .radio {
    border-color: #dcdcdc;
    background: #eeeeee;
}

.focus {
    border: 3px solid #000;
    height: 31px;
    line-height: 24px;
    margin-left: -2px;
    width: 70px;
    padding-left: 0;
}

.checks {
    margin-top: 19px;
}

.check {
    width: 19px;
    height: 19px;
    border: 2px solid #8c8c8c;
    border-radius: 3px;
    flex: none;
    margin-left: 1px;
    margin-right: -2px;
}

.check.left {
    margin-left: -1.500px;
    margin-right: -1.500px;
}

.dlg-buttons {
    margin-top: 22px;
    display: flex;
    align-items: center;
}

.dlg-btn {
    width: 75px;
    height: 35px;
    background: #fff;
    border: 1px solid #8c8c8c;
    border-radius: 5px;
    font-family: inherit;
    font-size: 17px;
    color: #333;
}

.dlg-btn.link {
    width: 101px;
    background: #f2f2f2;
    border-color: #e2e2e2;
    color: #a0a0a0;
    margin-right: auto;
}

.dlg-btn.ok {
    border: 2px solid #000;
    margin-right: 15px;
}

.arrows {
    position: absolute;
    left: 0;
    top: 0;
    pointer-events: none;
    z-index: 6;
}
```

FILE: script.js
```javascript
// Sheet content: rows 2-21. Only the cells not behind the dialog are filled in for rows 2-9.
const names = ["Ali Khan", "Sara Ahmed", "John Smith", "Ayesha Noor", "Hamza Ali", "Emma Davis", "David Lee", "Fatima Ali",
    "Usman Tariq", "Sophia King", "Noah Brown", "Zain Abbas", "Mariam Iqbal", "Lucas Hall", "Hina Raza", "Ethan Clark",
    "Amna Sheikh", "James Wilson", "Bilal Hassan", "Olivia Green"];

const values = [
    [103, 6200, 750, 7, 54008, 87], [104, 5800, 680, 5, 54009, 92], [105, 4650, 420, 2, 54010, 81],
    [106, 7050, 950, 9, 54011, 96], [101, 5400, 620, 4, 54012, 90], [102, 4950, 510, 3, 54013, 85],
    [103, 6400, 820, 7, 54014, 93], [104, 5700, 690, 5, 54015, 88], [105, 5300, 610, 4, 54016, 86],
    [106, 7600, 980, 10, 54017, 97], [101, 4800, 470, 3, 54018, 83], [102, 6000, 780, 6, 54019, 94]
];

const letters = "ABCDEFGHIJKLMNOPQRS".split("");
const grid = document.getElementById("grid");

function addCell(className, text) {
    const div = document.createElement("div");
    div.className = "cell " + className;
    div.textContent = text === undefined ? "" : text;
    grid.appendChild(div);
}

// Header row
addCell("head corner");
letters.forEach(l => addCell("head", l));
addCell("head");

// Data rows
for (let r = 2; r <= 21; r++) {
    addCell("rowhead", r);
    const row = values[r - 10] || [];
    letters.forEach((l, i) => {
        if (l === "A") addCell("col-a flag", 999 + r);
        else if (l === "B") addCell("name", names[r - 2]);
        else if (l >= "C" && l <= "E") addCell("sel flag", row[i - 2]);
        else if (l >= "F" && l <= "H") addCell(row.length ? "flag" : "", row[i - 2]);
        else if (l === "K" && r === 3) addCell("copied", 1);
        else addCell("");
    });
    addCell("");
}

// Partly visible row 22
addCell("rowhead plain");
letters.forEach(l => addCell(l === "A" ? "col-a" : ""));
addCell("");
```
